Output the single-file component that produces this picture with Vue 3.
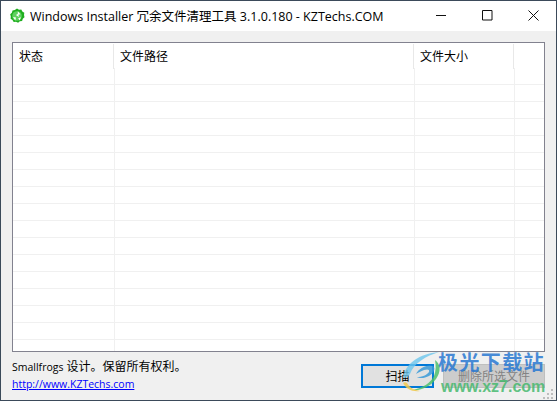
<script setup>
const rows = Array.from({ length: 17 }, (_, i) => i);
const columns = [
  { name: "状态", width: 101 },
  { name: "文件路径", width: 300 },
  { name: "文件大小", width: 100 },
  { name: "", width: 31 },
];
</script>

<template>
  <div class="window">
    <div class="titlebar">
      <svg class="app-icon" width="16" height="16" viewBox="0 0 16 16">
        <path d="M8 .5l2 1.2 2.3-.2 1 2 2 1.2-.3 2.3.5 2.2-1.7 1.5-.7 2.2-2.3.3-1.7 1.5-2.1-.9-2.3.2-1.2-2-1.9-1.2.2-2.3-.6-2.2 1.7-1.6.6-2.2 2.3-.4z" fill="#1fae1f" />
        <circle cx="8" cy="8" r="4.8" fill="#5fd05f" />
        <path d="M8.8 3.2l2.6 3-2 .5.5 2.4-3-2.1 1.9-.9zM4 9l3 .5-.7 3zM9.2 10.2l2.8-1-1.4 3.2z" fill="#fff" />
      </svg>
      <span class="title">Windows Installer 冗余文件清理工具 3.1.0.180 - KZTechs.COM</span>
      <div class="controls">
        <svg width="11" height="11" viewBox="0 0 11 11"><path d="M0 5.5h10" stroke="#111" fill="none" /></svg>
        <svg width="11" height="11" viewBox="0 0 11 11"><path d="M.5.5h9.5v9.5h-9.5z" stroke="#111" fill="none" /></svg>
        <svg width="11" height="11" viewBox="0 0 11 11"><path d="M.5.5l10 10M10.5.5l-10 10" stroke="#111" fill="none" /></svg>
      </div>
    </div>
    <div class="body">
      <div class="list">
        <div class="list-head">
          <div
            v-for="col in columns"
            :key="col.name"
            class="head-cell"
            :style="{ width: col.width + 'px' }"
          >
            {{ col.name }}
          </div>
        </div>
        <div class="list-rows">
          <div v-for="row in rows" :key="row" class="list-row">
            <div
              v-for="col in columns"
              :key="col.name"
              class="cell"
              :style="{ width: col.width + 'px' }"
            ></div>
          </div>
        </div>
      </div>
      <div class="footer">
        <div class="credits">
          <div class="design"><span class="latin">Smallfrogs</span> 设计。保留所有权利。</div>
          <a class="link" href="#">http://www.KZTechs.com</a>
        </div>
        <div class="buttons">
          <button class="btn primary">扫描</button>
          <button class="btn disabled">删除所选文件</button>
        </div>
      </div>
      <div class="watermark">
        <svg class="swoosh" width="40" height="42" viewBox="0 0 40 42">
          <path d="M1 25C4 11 17 2 37 0 24 4 12 11 8 22c-2 3-5 5-7 3z" fill="#6cc5ee" opacity=".8" />
          <path d="M33 8c6 4 6 12 1 19-5 7-15 12-23 11 9-2 18-7 21-14 2-5 2-11 1-16z" fill="#4cbf6b" opacity=".85" />
          <path d="M14 22c3-6 11-10 17-8 3 2 1 7-4 10-4 2-9 3-12 1 5 0 10-2 12-5 1-3-2-3-5-2-3 1-6 3-8 4z" fill="#3a9ad8" opacity=".85" />
          <path d="M1 31c3 6 9 9 17 8-6-1-10-3-13-8-1-1-3-1-4 0z" fill="#f2c94c" opacity=".85" />
        </svg>
        <div class="wm-text">
          <div class="wm-cn">极光下载站</div>
          <div class="wm-url">www.xz7.com</div>
        </div>
      </div>
      <svg class="grip" width="12" height="12" viewBox="0 0 12 12">
        <path d="M8 2h2v2H8zM4 6h2v2H4zM8 6h2v2H8zM0 10h2v2H0zM4 10h2v2H4zM8 10h2v2H8z" fill="#bdbdbd" />
      </svg>
    </div>
  </div>
</template>

<style>
html,
body {
  margin: 0;
  background: #f0f0f0;
}
</style>

<style scoped>
.window {
  width: 557px;
  height: 401px;
  box-sizing: border-box;
  border: 1px solid #3b4a5a;
  display: flex;
  flex-direction: column;
  font-family: "Open Sans", "Noto Sans CJK SC", sans-serif;
  color: #000;
  overflow: hidden;
}
.titlebar {
  height: 30px;
  flex: none;
  background: #fff;
  display: flex;
  align-items: center;
  padding-left: 8px;
}
.app-icon {
  flex: none;
  margin-top: -1px;
}
.title {
  margin-left: 5px;
  font-size: 12.5px;
  white-space: nowrap;
  flex: 1;
  margin-top: -2px;
}
.controls {
  display: flex;
  gap: 35px;
  padding-right: 17px;
  margin-top: -2px;
}
.controls svg {
  display: block;
}
.body {
  flex: 1;
  position: relative;
  background: #f0f0f0;
  padding: 11px 11px 0;
  display: flex;
  flex-direction: column;
}
.list {
  height: 310px;
  box-sizing: border-box;
  border: 1px solid #82828f;
  background: #fff;
  overflow: hidden;
}
.list-head {
  display: flex;
  height: 25px;
}
.head-cell {
  box-sizing: border-box;
  flex: none;
  border-right: 1px solid #e8e8e8;
  padding-left: 6px;
  font-size: 12px;
  line-height: 26px;
  height: 25px;
  margin-top: 1px;
}
.list-row {
  display: flex;
  height: 17px;
  box-sizing: border-box;
  border-bottom: 1px solid #f0f0f0;
  padding-left: 1px;
}
.cell {
  box-sizing: border-box;
  flex: none;
  border-right: 1px solid #f0f0f0;
}
.footer {
  display: flex;
  justify-content: space-between;
  padding-top: 6px;
}
.credits {
  font-size: 12px;
  line-height: 17px;
}
.latin {
  font-size: 10.5px;
}
.design {
  white-space: nowrap;
}
.link {
  color: #0000ff;
  text-decoration: underline;
  display: block;
  font-size: 10.5px;
  line-height: 16px;
}
.buttons {
  display: flex;
  gap: 9px;
  padding-top: 6px;
}
.btn {
  width: 73px;
  height: 24px;
  box-sizing: border-box;
  font-family: inherit;
  font-size: 12px;
  padding: 0;
  white-space: nowrap;
}
.primary {
  background: #e1e1e1;
  border: 2px solid #0078d7;
  color: #000;
}
.disabled {
  width: 102px;
  background: #cccccc;
  border: 1px solid #bfbfbf;
  color: #838383;
}
.watermark {
  position: absolute;
  left: 401px;
  top: 321px;
  pointer-events: none;
}
.swoosh {
  position: absolute;
  left: 0;
  top: 0;
}
.wm-text {
  margin-left: 36px;
  font-family: "Liberation Sans", "Noto Sans CJK SC", sans-serif;
  white-space: nowrap;
}
.wm-cn {
  font-size: 20px;
  font-weight: 700;
  line-height: 22px;
  color: rgba(40, 120, 210, 0.85);
  letter-spacing: 1.4px;
}
.wm-url {
  font-size: 16px;
  font-weight: 700;
  line-height: 18px;
  margin-top: 4px;
  margin-left: 3px;
  color: rgba(70, 185, 110, 0.85);
}
.grip {
  position: absolute;
  right: 1px;
  bottom: 1px;
}
</style>
